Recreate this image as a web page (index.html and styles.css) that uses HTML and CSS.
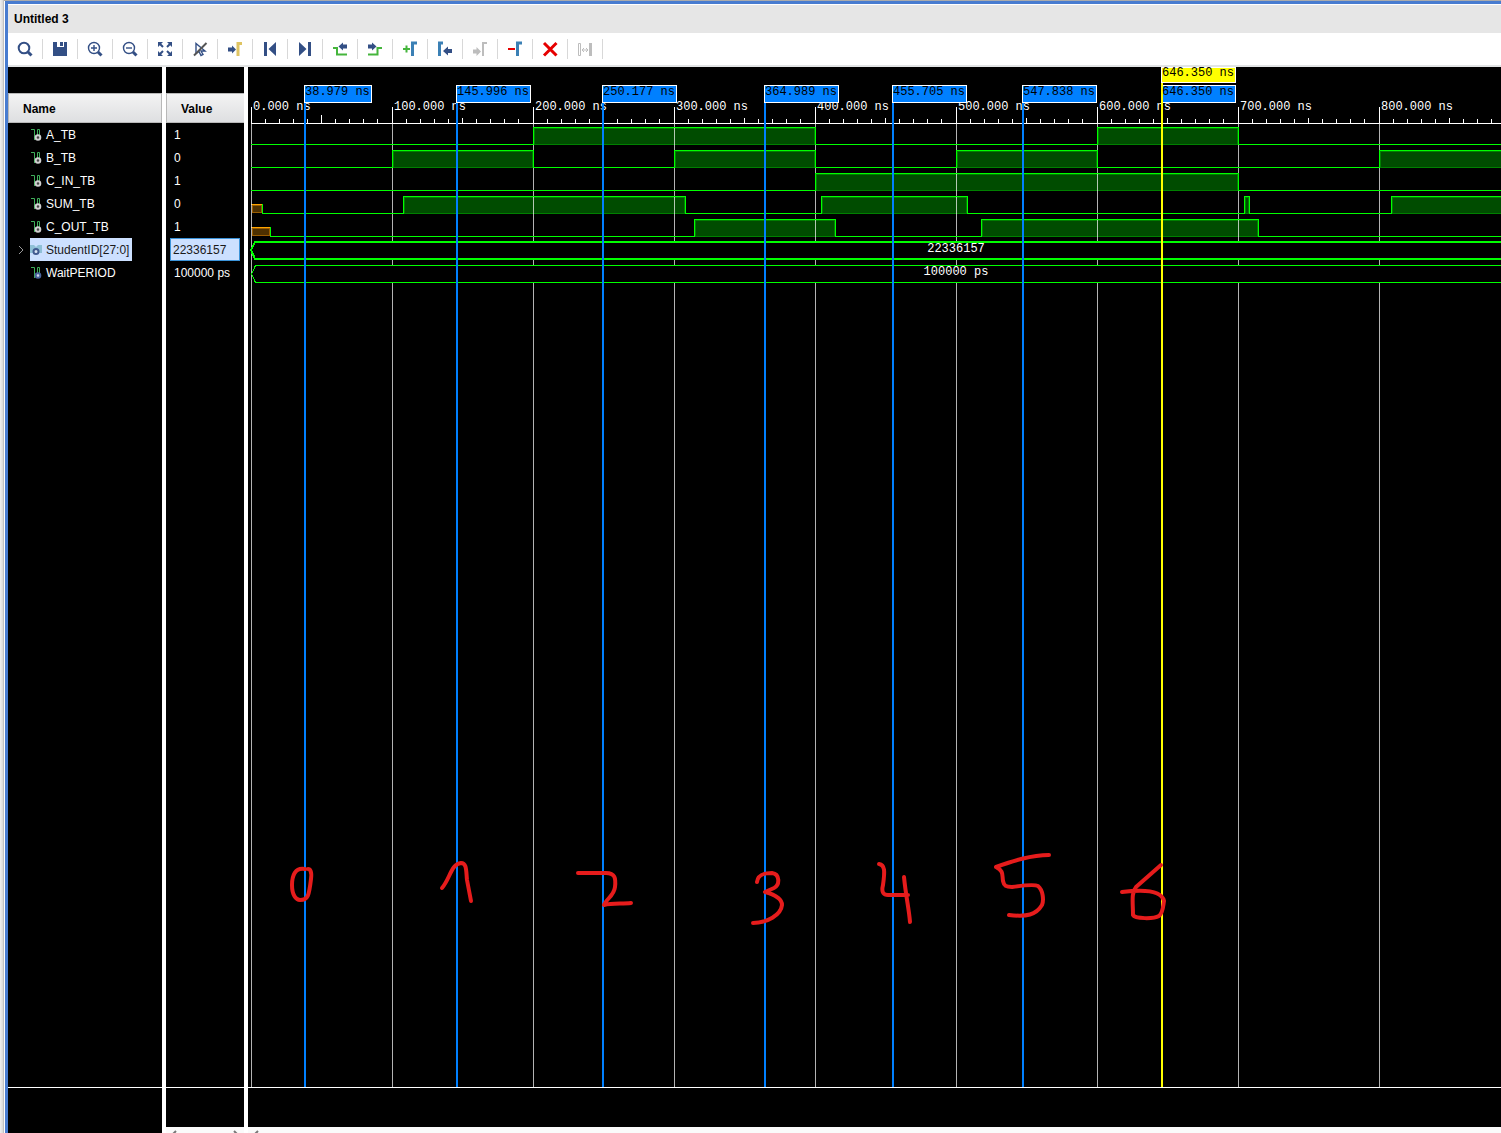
FILE: index.html
```html
<!DOCTYPE html>
<html lang="en">
<head>
<meta charset="utf-8">
<title>Untitled 3</title>
<link rel="stylesheet" href="styles.css">
</head>
<body>
<div class="window">
  <h1 class="title">Untitled 3</h1>
  <div class="toolbar" role="toolbar" aria-label="Waveform tools">
    <button class="tool" aria-label="Search"><svg viewBox="0 0 16 16"><circle cx="7" cy="7" r="5.300" class="s-navy"/><path d="M11 11L14.500 14.500" class="s-navy thick"/></svg></button>
    <button class="tool" aria-label="Save"><svg viewBox="0 0 16 16"><path d="M1 1h4v5h7V1h3v14H1z M8 1h3v4H8z" class="f-navy"/></svg></button>
    <button class="tool" aria-label="Zoom in"><svg viewBox="0 0 16 16"><circle cx="7" cy="7" r="5.500" class="s-navy mid"/><path d="M7 4v6M4 7h6" class="s-navy mid"/><path d="M11 11l3.500 3.500" class="s-navy thick"/></svg></button>
    <button class="tool" aria-label="Zoom out"><svg viewBox="0 0 16 16"><circle cx="7" cy="7" r="5.500" class="s-navy mid"/><path d="M4 7h6" class="s-navy mid"/><path d="M11 11l3.500 3.500" class="s-navy thick"/></svg></button>
    <button class="tool" aria-label="Zoom fit"><svg viewBox="0 0 16 16"><path d="M1 1h5L1 6z M15 1v5l-5-5z M1 15v-5l5 5z M15 15h-5l5-5z" class="f-navy"/><path d="M3 3l3 3M13 3l-3 3M3 13l3-3M13 13l-3-3" class="s-navy"/></svg></button>
    <button class="tool" aria-label="Toggle cursor"><svg viewBox="0 0 16 16"><path d="M4 2.500v10l3-2 2 4 2-1-2-3.500h4z" class="s-navy mid"/><path d="M2 14.500L14.500 2" class="s-gray thick"/></svg></button>
    <button class="tool" aria-label="Go to cursor"><svg viewBox="0 0 16 16"><path d="M1 6.500h4V4.500l4 4-4 4v-2H1z" class="f-navy"/><path d="M11 15V2.500h4" class="s-gold thick"/></svg></button>
    <button class="tool" aria-label="Go to start"><svg viewBox="0 0 16 16"><path d="M2 1h3v14H2z M14 1v14L6.500 8z" class="f-navy"/></svg></button>
    <button class="tool" aria-label="Go to end"><svg viewBox="0 0 16 16"><path d="M11 1h3v14h-3z M2 1v14l7.500-7z" class="f-navy"/></svg></button>
    <button class="tool" aria-label="Previous transition"><svg viewBox="0 0 16 16"><path d="M1 7h4v6.500h10" class="s-green"/><path d="M15 3.500v4h-4v2L6.500 5.500 11 1.500v2z" class="f-navy"/></svg></button>
    <button class="tool" aria-label="Next transition"><svg viewBox="0 0 16 16"><path d="M1 13.500h9.500V7H15" class="s-green"/><path d="M1 3.500v4h4v2l4.500-4L5 1.500v2z" class="f-navy"/></svg></button>
    <button class="tool" aria-label="Add marker"><svg viewBox="0 0 16 16"><path d="M1 8h7M4.500 4.500v7" class="s-green"/><path d="M10.500 15V2H15" class="s-blue"/></svg></button>
    <button class="tool" aria-label="Previous marker"><svg viewBox="0 0 16 16"><path d="M2.500 15V2H6" class="s-blue"/><path d="M15 8v4h-4v2.500L6 10l5-4.500V8z" class="f-navy"/></svg></button>
    <button class="tool" aria-label="Next marker" disabled><svg viewBox="0 0 16 16"><path d="M1 8.500h3.500V6L9 10.500 4.500 15v-2.500H1z" class="f-pale"/><path d="M11 15V2h4" class="s-pale"/></svg></button>
    <button class="tool" aria-label="Delete marker"><svg viewBox="0 0 16 16"><path d="M1 8h7" class="s-red"/><path d="M10.500 15V2H15" class="s-blue"/></svg></button>
    <button class="tool" aria-label="Delete all markers"><svg viewBox="0 0 16 16"><path d="M2 2l12.500 12.500M14.500 2L2 14.500" class="s-red thick"/></svg></button>
    <button class="tool" aria-label="Swap cursors" disabled><svg viewBox="0 0 16 16"><path d="M1.500 2.500h2v12h-2z M5 9h6M7 7L5 9l2 2M9 7l2 2-2 2" class="s-pale thin"/><path d="M12 2h3v13h-3z" class="f-pale"/></svg></button>
  </div>

  <main class="viewer">
    <section class="pane names">
      <div class="body">
        <table class="signals">
          <thead><tr><th scope="col">Name</th></tr></thead>
          <tbody>
            <tr><td><span class="signal"><svg class="glyph"><use href="#wire"/></svg>A_TB</span></td></tr>
            <tr><td><span class="signal"><svg class="glyph"><use href="#wire"/></svg>B_TB</span></td></tr>
            <tr><td><span class="signal"><svg class="glyph"><use href="#wire"/></svg>C_IN_TB</span></td></tr>
            <tr><td><span class="signal"><svg class="glyph"><use href="#wire"/></svg>SUM_TB</span></td></tr>
            <tr><td><span class="signal"><svg class="glyph"><use href="#wire"/></svg>C_OUT_TB</span></td></tr>
            <tr><td class="expandable"><button class="expand" aria-label="Expand StudentID"><svg viewBox="0 0 8 10"><path d="M2 1l4 4-4 4"/></svg></button><span class="signal selected"><svg class="glyph"><use href="#bus"/></svg>StudentID[27:0]</span></td></tr>
            <tr><td><span class="signal"><svg class="glyph"><use href="#constant"/></svg>WaitPERIOD</span></td></tr>
          </tbody>
        </table>
      </div>
      <div class="foot"></div>
      <div class="scroll-blank"></div>
    </section>

    <section class="pane values">
      <div class="body">
        <table class="signals">
          <thead><tr><th scope="col">Value</th></tr></thead>
          <tbody>
            <tr><td>1</td></tr>
            <tr><td>0</td></tr>
            <tr><td>1</td></tr>
            <tr><td>0</td></tr>
            <tr><td>1</td></tr>
            <tr><td><span class="current">22336157</span></td></tr>
            <tr><td>100000 ps</td></tr>
          </tbody>
        </table>
      </div>
      <div class="foot"></div>
      <div class="scroll"><svg class="arrow" viewBox="0 0 8 6"><path d="M6 4L2 8"/></svg><svg class="arrow" viewBox="0 0 8 6"><path d="M2 4l4 4"/></svg></div>
    </section>

    <section class="pane waves">
      <div class="body">
        <svg class="chart" aria-label="Waveforms">
          <defs>
            <path id="ticks" d="M14.500 52v5M28.500 52v5M42.500 52v5M56.500 52v5M70.500 51v6M84.500 52v5M98.500 52v5M112.500 52v5M126.500 52v5"/>
          </defs>

          <!-- time ruler -->
          <g class="ruler">
            <path d="M3 56.500H4000M3.500 40v17M144.500 40v17M285.500 40v17M426.500 40v17M567.500 40v17M708.500 40v17M849.500 40v17M990.500 40v17M1131.500 40v17M73.500 48v8"/>
            <use href="#ticks" x="3"/><use href="#ticks" x="144"/><use href="#ticks" x="285"/><use href="#ticks" x="426"/><use href="#ticks" x="567"/><use href="#ticks" x="708"/><use href="#ticks" x="849"/><use href="#ticks" x="990"/><use href="#ticks" x="1131"/>
          </g>
          <g class="times">
            <text x="5" y="43">0.000 ns</text><text x="146" y="43">100.000 ns</text><text x="287" y="43">200.000 ns</text><text x="428" y="43">300.000 ns</text><text x="569" y="43">400.000 ns</text><text x="710" y="43">500.000 ns</text><text x="851" y="43">600.000 ns</text><text x="992" y="43">700.000 ns</text><text x="1133" y="43">800.000 ns</text>
          </g>

          <!-- high periods -->
          <g class="high">
            <path d="M286.500 61.500H566.500V77.500H286.500z M850.500 61.500H989.500V77.500H850.500z"/>
            <path d="M145.500 84.500H284.500V100.500H145.500z M427.500 84.500H566.500V100.500H427.500z M709.500 84.500H848.500V100.500H709.500z M1132.500 84.500H4000V100.500H1132.500z"/>
            <path d="M568.500 107.500H989.500V123.500H568.500z"/>
            <path d="M156.500 130.500H436.500V146.500H156.500z M574.500 130.500H718.500V146.500H574.500z M997.500 130.500H1000.500V146.500H997.500z M1144.500 130.500H4000V146.500H1144.500z"/>
            <path d="M447.500 153.500H586.500V169.500H447.500z M734.500 153.500H1009.500V169.500H734.500z"/>
          </g>
          <g class="unknown">
            <path d="M4.500 138.500H13.500V145.500H4.500z M4.500 161.500H21.500V168.500H4.500z"/>
            <path class="edge" d="M3 137.500H15M3 160.500H23"/>
          </g>

          <!-- grid -->
          <g class="grid">
            <rect x="3" y="57" width="1" height="100%"/><rect x="144" y="57" width="1" height="100%"/><rect x="285" y="57" width="1" height="100%"/><rect x="426" y="57" width="1" height="100%"/><rect x="567" y="57" width="1" height="100%"/><rect x="708" y="57" width="1" height="100%"/><rect x="849" y="57" width="1" height="100%"/><rect x="990" y="57" width="1" height="100%"/><rect x="1131" y="57" width="1" height="100%"/>
          </g>

          <!-- levels -->
          <g class="level">
            <path d="M3 77.500H285.500V60.500H567.500V77.500H849.500V60.500H990.500V77.500H4000"/>
            <path d="M3 100.500H144.500V83.500H285.500V100.500H426.500V83.500H567.500V100.500H708.500V83.500H849.500V100.500H1131.500V83.500H4000"/>
            <path d="M3 123.500H567.500V106.500H990.500V123.500H4000"/>
            <path d="M14.500 137V146.500H155.500V129.500H437.500V146.500H573.500V129.500H719.500V146.500H996.500V129.500H1001.500V146.500H1143.500V129.500H4000"/>
            <path d="M22.500 160V169.500H446.500V152.500H587.500V169.500H733.500V152.500H1010.500V169.500H4000"/>
          </g>
          <g class="bus">
            <path class="bold" d="M4000 175H7L3 183l4 9H4000"/>
            <path d="M4000 198.500H7.500L3.500 207l4 8.500H4000"/>
            <text x="708" y="185">22336157</text>
            <text x="708" y="208">100000 ps</text>
          </g>

          <!-- markers -->
          <g class="marker">
            <rect class="line" x="56" y="36" width="2" height="100%"/><rect class="flag" x="56.500" y="18.500" width="67" height="17"/><text x="57" y="28">38.979 ns</text>
            <rect class="line" x="208" y="36" width="2" height="100%"/><rect class="flag" x="208.500" y="18.500" width="74" height="17"/><text x="209" y="28">145.996 ns</text>
            <rect class="line" x="354" y="36" width="2" height="100%"/><rect class="flag" x="354.500" y="18.500" width="74" height="17"/><text x="355" y="28">250.177 ns</text>
            <rect class="line" x="516" y="36" width="2" height="100%"/><rect class="flag" x="516.500" y="18.500" width="74" height="17"/><text x="517" y="28">364.989 ns</text>
            <rect class="line" x="644" y="36" width="2" height="100%"/><rect class="flag" x="644.500" y="18.500" width="74" height="17"/><text x="645" y="28">455.705 ns</text>
            <rect class="line" x="774" y="36" width="2" height="100%"/><rect class="flag" x="774.500" y="18.500" width="74" height="17"/><text x="775" y="28">547.838 ns</text>
            <rect class="flag" x="913.500" y="18.500" width="74" height="17"/>
          </g>
          <g class="cursor">
            <rect class="line" x="913" y="16" width="2" height="100%"/><rect class="flag" x="913.500" y="0.500" width="74" height="15"/>
            <text x="914" y="9">646.350 ns</text><text x="914" y="28">646.350 ns</text>
          </g>

          <!-- freehand pen strokes -->
          <g class="ink">
            <path d="M57 802C47 800 44 809 44 818C44 828 48 833 52 833C60 833 61 829 63 812C64 804 62 802 60 802"/>
            <path d="M194 821C202 812 203 797 213 796C219 796 218 804 219 813L223 834"/>
            <path d="M330 806H358C367 806 368 811 367 820C366 829 358 832 356 838C364 836 374 837 383 836"/>
            <path d="M509 815C510 807 517 806 524 806C532 807 532 818 526 821L517 825C528 828 534 832 534 838C533 848 519 856 505 856"/>
            <path d="M631 797C637 798 637 804 635 818C633 826 636 828 640 828H660M656 810C658 830 661 842 662 855"/>
            <path d="M801 788C783 788 765 794 748 800C756 804 754 808 755 814C756 819 758 820 764 820C778 818 788 818 790 819C795 823 796 833 794 838C788 848 779 850 761 848"/>
            <path d="M913 798L888 820C883 826 885 836 885 848C887 852 906 852 911 849C915 846 915 840 916 834C914 824 898 822 874 825"/>
          </g>
        </svg>
      </div>
      <div class="foot"></div>
      <div class="scroll"><svg class="arrow" viewBox="0 0 8 6"><path d="M6 4L2 8"/></svg></div>
    </section>
  </main>
</div>

<svg class="sprite" aria-hidden="true">
  <symbol id="wire" viewBox="0 0 12 12"><path d="M1 .5h3.500v10.500M7.500 7V.5h2V7" fill="none" stroke="#3fae5a"/><circle cx="8" cy="8.500" r="2.300" fill="#444" stroke="#d0d0d0" stroke-width="2"/></symbol>
  <symbol id="constant" viewBox="0 0 12 12"><path d="M1 .5h3.500v10.500M7.500 7V.5h2V7" fill="none" stroke="#3fae5a"/><circle cx="8" cy="8.500" r="2.300" fill="#d0d8e8" stroke="#4a649c" stroke-width="2"/></symbol>
  <symbol id="bus" viewBox="0 0 12 12"><path d="M0 1h4l2 2 2-2h4v8H8L6 7 4 9H0z" fill="#8fc0d6"/><circle cx="6" cy="7.500" r="2.500" fill="#d8e4f4" stroke="#415a90" stroke-width="2"/></symbol>
</svg>
</body>
</html>
```
FILE: styles.css
```css
* { box-sizing: border-box; }

body {
  margin: 0;
  height: 100vh;
  overflow: hidden;
  padding: 1px 0 0 4px;
  background: linear-gradient(to right, #f0f0f0 0, #d8d8d8 3px, #ababab 4px, #ababab 5px);
  font: 12px/16px "Liberation Sans", Arial, sans-serif;
}

.window {
  display: flex;
  flex-direction: column;
  height: 100%;
  border-left: 1px solid #fff;
  background: #fff;
  box-shadow: inset 3px 3px #487cd0;
  padding: 4px 0 0 3px;
}

.title {
  margin: 0;
  padding: 6px;
  background: #e6e6e6;
  font-size: 12px;
  line-height: 16px;
}

.toolbar {
  display: flex;
  align-items: center;
  height: 34px;
  flex: none;
  border-bottom: 2px solid #e2e4e5;
}

.tool {
  display: flex;
  align-items: center;
  justify-content: center;
  width: 35px;
  height: 20px;
  padding: 0;
  border: 0;
  border-right: 1px solid #d8d8d8;
  background: none;
}
.tool svg { width: 16px; height: 16px; fill: none; stroke-width: 2; }
.tool .f-navy { fill: #334f85; }
.tool .f-pale { fill: #bdbdbd; }
.s-navy { stroke: #334f85; }
.s-gray { stroke: #555; }
.s-gold { stroke: #dfc462; }
.s-green { stroke: #45b53c; }
.s-blue { stroke: #3b80b5; stroke-width: 3; }
.s-pale { stroke: #bdbdbd; }
.s-red { stroke: #e60000; }
.thin { stroke-width: 1; }
.mid { stroke-width: 1.4; }
.thick { stroke-width: 3; }
.s-gray.thick { stroke-width: 2; }

.viewer {
  display: grid;
  grid-template-columns: 154px 78px 1fr;
  gap: 4px;
  flex: 1;
  min-height: 0;
}

.pane { display: flex; flex-direction: column; min-width: 0; }
.body {
  display: flex;
  flex-direction: column;
  flex: 1;
  min-height: 0;
  overflow: hidden;
  background: #000;
  border-bottom: 1px solid #fff;
}
.names .body, .values .body { padding-top: 26px; }
.foot { height: 39px; background: #000; }
.scroll, .scroll-blank { height: 6px; }
.scroll { display: flex; justify-content: space-between; padding: 0 4px; background: #fafafa; }
.scroll-blank { background: #000; }
.arrow { width: 8px; height: 6px; fill: none; stroke: #777; stroke-width: 2; }

.signals {
  width: 100%;
  border-collapse: separate;
  border-spacing: 0;
  color: #fff;
}
.signals th {
  height: 30px;
  padding: 2px 14px 0;
  border: 1px solid #b8b8b8;
  background: linear-gradient(#f3f3f3, #dedfe1);
  color: #000;
  text-align: left;
}
.signals td { height: 23px; line-height: 21px; white-space: nowrap; }
.names td { padding: 0 0 0 22px; }
.names td.expandable { padding-left: 8px; }
.values td { padding: 2px 8px 0; }

.signal {
  display: inline-flex;
  align-items: center;
  gap: 4px;
  padding: 2px 3px 0 0;
  vertical-align: top;
}
.glyph { width: 12px; height: 12px; margin-bottom: 1px; }
.selected { background: #cce0ff; color: #1a1a1a; }
.current {
  display: block;
  width: 70px;
  height: 23px;
  margin: -2px 0 0 -4px;
  padding: 1px 0 0 2px;
  border: 1px solid #3b93d8;
  background: #cce0ff;
  color: #1a1a1a;
}
.expand { width: 14px; height: 23px; padding: 0; border: 0; background: none; vertical-align: top; }
.expand svg { display: block; width: 8px; height: 10px; fill: none; stroke: #999; margin-left: 1px; }

.chart { display: block; width: 100%; height: 100%; font: 12px "Liberation Mono", "Courier New", monospace; }
.ruler, .level, .high, .unknown, .bus path { fill: none; shape-rendering: crispEdges; }
.ruler { stroke: #fff; }
.times, .bus text { fill: #fff; }
.high { fill: #004c00; stroke: #008000; }
.unknown { fill: #4d3000; stroke: #995c00; }
.unknown .edge { stroke: #ffa500; }
.grid { fill: #fff; fill-opacity: .7; }
.level { stroke: #0f0; }
.bus path { fill: #000; stroke: #0f0; }
.bus .bold { stroke-width: 2; }
.bus text { text-anchor: middle; }
.flag { stroke: #fff; }
.marker .line, .marker .flag { fill: #0080ff; }
.cursor .line, .cursor .flag { fill: #ff0; }
.ink { fill: none; stroke: #e61c1c; stroke-width: 4; stroke-linecap: round; stroke-linejoin: round; }

.sprite { position: absolute; width: 0; height: 0; }
```
